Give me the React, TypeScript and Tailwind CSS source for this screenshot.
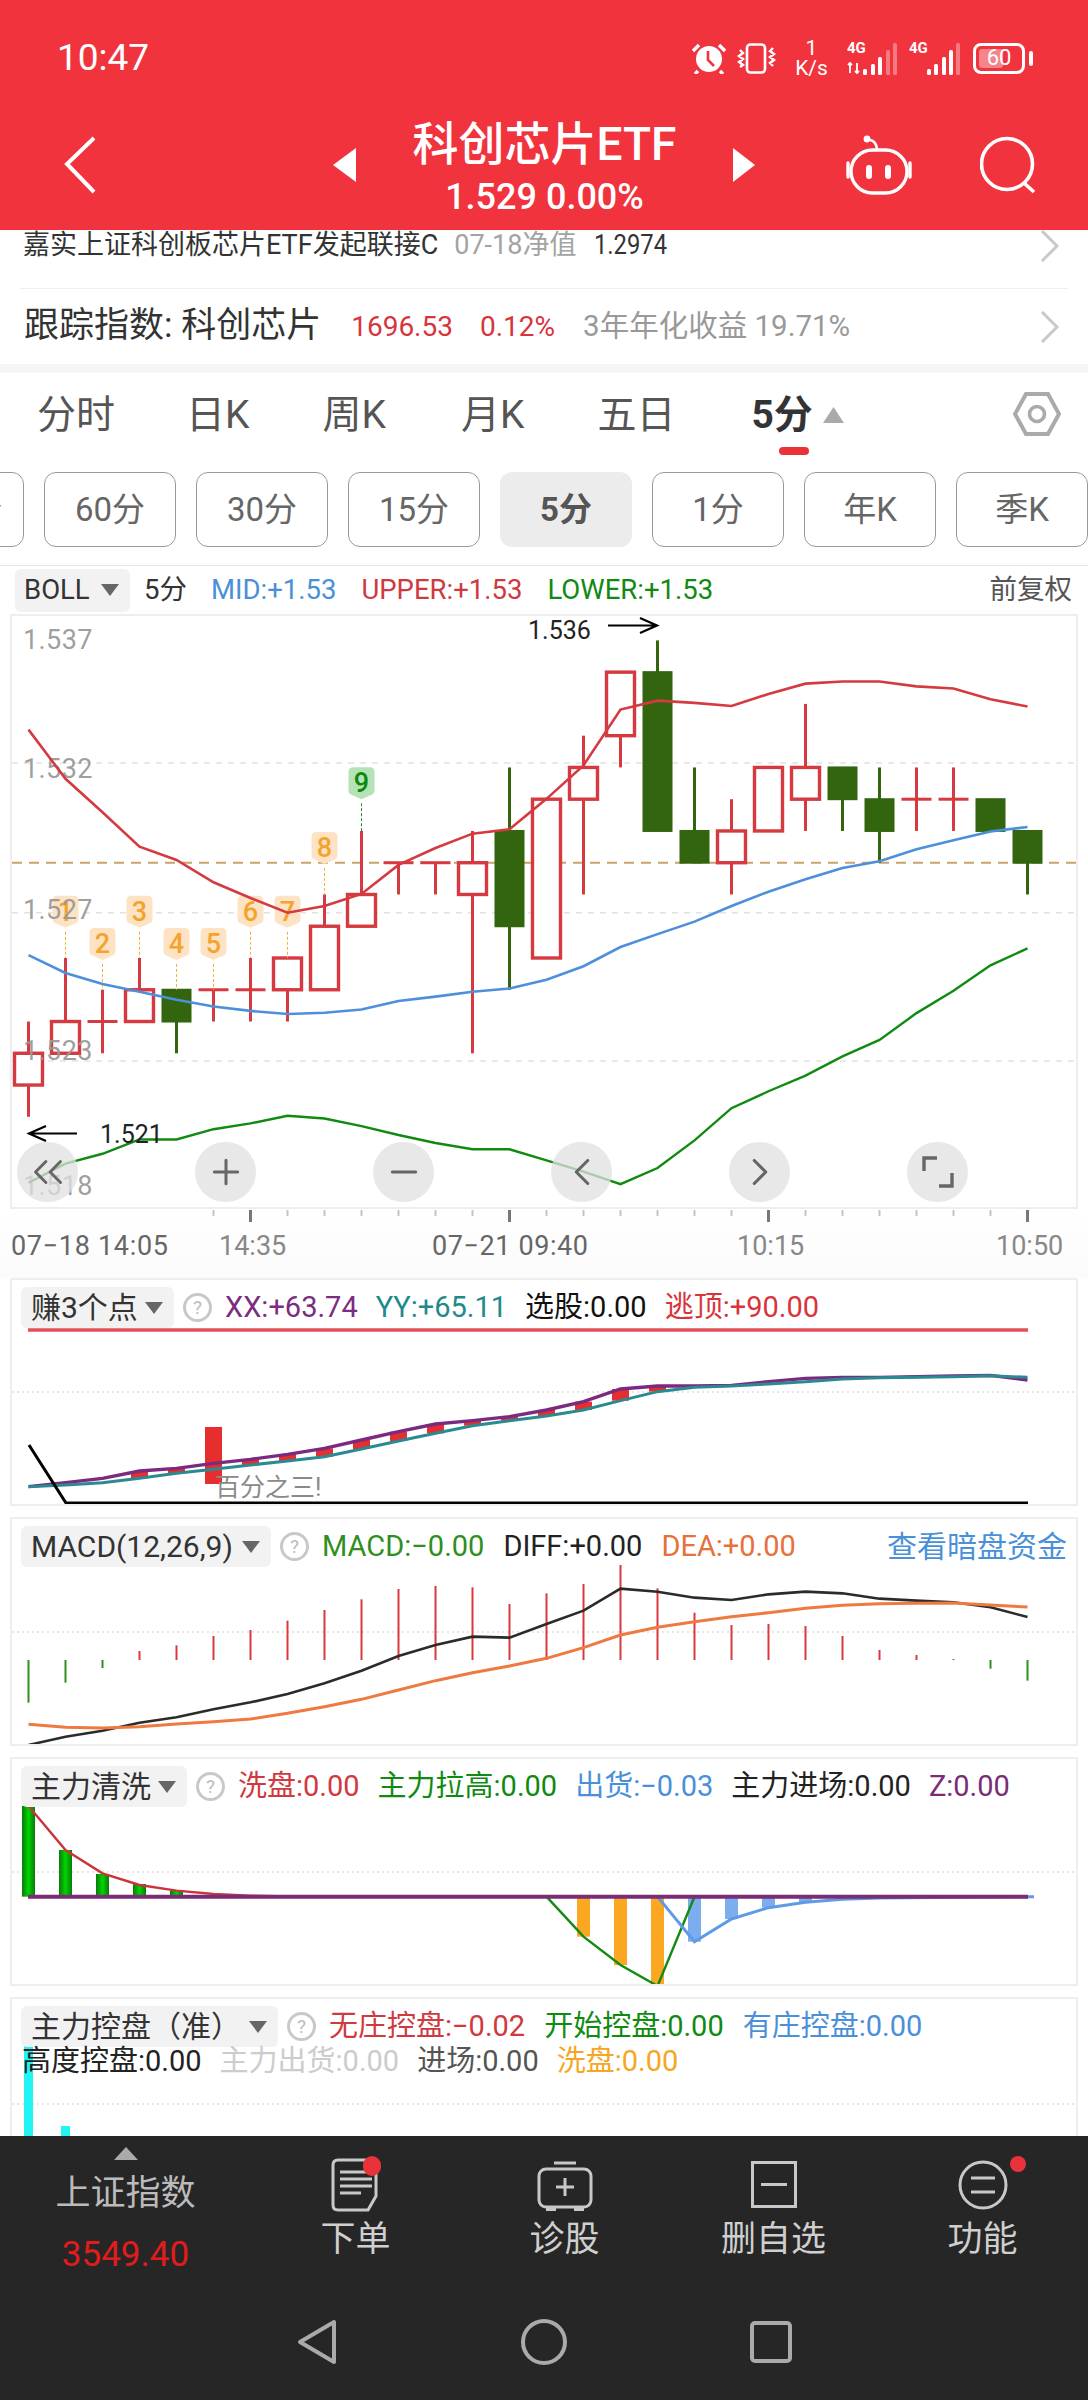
import React from "react";
import { ChevronLeft, ChevronRight, ChevronsLeft, Minus, Plus } from "lucide-react";

// chart x of candle i, same pitch in every panel
const cx = (i: number) => 28.5 + 37 * i;
// main chart: price unit (1.5xx) to page y
const py = (u: number) => 640.4 + (36 - u) * 31.76;
const mv = (v: number) => 560 + v / 2.24;
const z5 = (v: number) => 1260 + v / 3;
const z6 = (v: number) => 1740 + v / 3;

const line = (vals: number[], toY: (v: number) => number) =>
  vals.map((v, i) => `${cx(i)},${toY(v)}`).join(" ");

// [bodyLow, bodyHigh, wickLow, wickHigh, up]
const candles: [number, number, number, number, boolean][] = [
  [22, 23, 21, 24, true],
  [23, 24, 23, 26, true],
  [24, 24, 23, 25, true],
  [24, 25, 24, 26, true],
  [24, 25, 23, 25, false],
  [25, 25, 24, 25, true],
  [25, 25, 24, 26, true],
  [25, 26, 24, 26, true],
  [25, 27, 25, 28, true],
  [27, 28, 27, 30, true],
  [29, 29, 28, 29, true],
  [29, 29, 28, 29, true],
  [28, 29, 23, 30, true],
  [27, 30, 25, 32, false],
  [26, 31, 26, 31, true],
  [31, 32, 28, 33, true],
  [33, 35, 32, 35, true],
  [30, 35, 30, 36, false],
  [29, 30, 29, 32, false],
  [29, 30, 28, 31, true],
  [30, 32, 30, 32, true],
  [31, 32, 30, 34, true],
  [31, 32, 30, 32, false],
  [30, 31, 29, 32, false],
  [31, 31, 30, 32, true],
  [31, 31, 30, 32, true],
  [30, 31, 30, 31, false],
  [29, 30, 28, 30, false],
];

const upper = [380, 490, 565, 642, 672, 722, 757, 790, 775, 748, 683, 645, 613, 603, 535, 460, 335, 315, 320, 327, 300, 277, 272, 272, 283, 288, 312, 328];
const mid = [885, 925, 950, 967, 985, 1000, 1010, 1017, 1014, 1007, 988, 978, 967, 960, 940, 910, 867, 838, 810, 775, 743, 715, 690, 675, 648, 628, 608, 598];
const lower = [1395, 1352, 1330, 1298, 1298, 1275, 1262, 1245, 1251, 1268, 1288, 1306, 1320, 1320, 1345, 1370, 1398, 1362, 1300, 1228, 1190, 1155, 1112, 1075, 1015, 965, 908, 870];

const badges = [
  { i: 1, n: "1", v: 788 },
  { i: 2, n: "2", v: 860 },
  { i: 3, n: "3", v: 788 },
  { i: 4, n: "4", v: 860 },
  { i: 5, n: "5", v: 860 },
  { i: 6, n: "6", v: 788 },
  { i: 7, n: "7", v: 788 },
  { i: 8, n: "8", v: 645 },
  { i: 9, n: "9", v: 500 },
];

const xx = [680, 668, 655, 633, 625, 610, 598, 583, 565, 540, 515, 492, 482, 470, 450, 425, 387, 378, 378, 376, 365, 355, 352, 352, 350, 348, 346, 360];
const yy = [680, 675, 668, 655, 640, 628, 615, 603, 590, 567, 543, 520, 497, 482, 468, 450, 422, 395, 382, 378, 372, 365, 357, 353, 352, 350, 347, 352];

const macdBars = [1328, 1268, 1224, 1173, 1156, 1128, 1110, 1082, 1050, 1018, 987, 978, 982, 1032, 1000, 972, 915, 985, 1058, 1095, 1092, 1098, 1128, 1170, 1185, 1197, 1226, 1262];
const diff = [1455, 1430, 1412, 1388, 1372, 1348, 1327, 1302, 1270, 1232, 1188, 1155, 1130, 1133, 1092, 1052, 986, 995, 1013, 1020, 1003, 995, 1000, 1016, 1022, 1027, 1042, 1071];
const dea = [1393, 1402, 1404, 1400, 1392, 1385, 1377, 1360, 1340, 1318, 1290, 1262, 1238, 1218, 1195, 1163, 1125, 1102, 1085, 1070, 1058, 1045, 1036, 1031, 1030, 1029, 1035, 1041];

const washTops = [198, 330, 402, 432, 452];
const washLine = [198, 330, 400, 435, 452, 462, 467, 469, 470];

const tabs = [
  { label: "分时", cls: "ml-[37px]" },
  { label: "日K", cls: "ml-[71px]" },
  { label: "周K", cls: "ml-[73px]" },
  { label: "月K", cls: "ml-[75px]" },
  { label: "五日", cls: "ml-[73px]" },
];
const periods = ["120分", "60分", "30分", "15分", "5分", "1分", "年K", "季K"];

const Signal = ({ arrows }: { arrows?: boolean }) => (
  <svg width="52" height="36" viewBox="0 0 52 36" fill="#fff">
    <text x="0" y="13" fontSize="15" fontWeight="700" fill="#fff">
      4G
    </text>
    {arrows && (
      <path d="M3 23v10M1 25l2-2 2 2M10 23v10M8 31l2 2 2-2" stroke="#fff" strokeWidth="1.8" fill="none" />
    )}
    <rect x={arrows ? 16 : 18} y="29" width="4" height="6" rx="1.5" />
    <rect x={arrows ? 24 : 25} y="24" width="4" height="11" rx="1.5" />
    <rect x={arrows ? 31 : 33} y="17" width="4" height="18" rx="1.5" />
    <rect x={arrows ? 39 : 40} y="10" width="4" height="25" rx="1.5" fillOpacity={arrows ? 0.35 : 1} />
    <rect x={arrows ? 46 : 47} y="3" width="4" height="32" rx="1.5" fillOpacity="0.35" />
  </svg>
);

const StatusBar = () => (
  <div className="h-[100px] pt-[16px] flex items-center pr-[55px] text-white shrink-0">
    <span className="ml-[57px] text-[37px] leading-[44px]">10:47</span>
    <div className="ml-auto flex items-center">
      <svg width="34" height="31" viewBox="0 0 34 31">
        <circle cx="17" cy="16" r="13" fill="#fff" />
        <path d="M16 8v9l6 6" stroke="#f1333e" strokeWidth="2.6" fill="none" />
        <path d="M1 8l6-6M33 8l-6-6M6 28l-3 3M28 28l3 3" stroke="#fff" strokeWidth="3.4" />
      </svg>
      <svg className="ml-[11px]" width="39" height="31" viewBox="0 0 39 31" fill="none" stroke="#fff">
        <rect x="10" y="1.5" width="18" height="28" rx="3.5" strokeWidth="2.6" />
        <path d="M3 7l3 3-4 3 4 3-4 3 4 3-3 2M36 5l-3 3 4 3-4 3 4 3-4 3 3 3" strokeWidth="2.4" />
      </svg>
      <div className="ml-[19px] w-[33px] flex flex-col items-center text-[21px] leading-[20px]">
        <span>1</span>
        <span>K/s</span>
      </div>
      <div className="ml-[19px]">
        <Signal arrows />
      </div>
      <div className="ml-[10px]">
        <Signal />
      </div>
      <div className="ml-[12px] flex items-center">
        <div className="relative w-[52px] h-[31px] rounded-[8px] border-[3px] border-white overflow-hidden flex items-center justify-center text-[22px] leading-none">
          <div className="absolute left-[3px] top-[3px] bottom-[3px] w-[24px] rounded-[3px] bg-white/40" />
          <span className="relative">60</span>
        </div>
        <div className="ml-[4px] w-[4px] h-[15px] rounded-full bg-white" />
      </div>
    </div>
  </div>
);

const NavRow = () => (
  <div className="flex-1 flex items-center text-white">
    <svg className="ml-[64px]" width="32" height="58" viewBox="0 0 32 58" fill="none" stroke="#fff" strokeWidth="4">
      <path d="M30 2L3 28l27 28" />
    </svg>
    <svg className="ml-[237px]" width="23" height="34" viewBox="0 0 23 34" fill="#fff">
      <path d="M23 0v34L0 17z" />
    </svg>
    <div className="w-[377px] flex flex-col items-center">
      <span className="text-[46px] leading-[60px] font-medium">科创芯片ETF</span>
      <span className="mt-[3px] text-[36px] leading-[40px] font-medium">1.529 0.00%</span>
    </div>
    <svg width="22" height="34" viewBox="0 0 22 34" fill="#fff">
      <path d="M0 0v34l22-17z" />
    </svg>
    <svg className="ml-[91px]" width="66" height="60" viewBox="0 0 66 60" fill="none" stroke="#fff" strokeWidth="3.4">
      <rect x="5" y="15" width="56" height="43" rx="21.5" />
      <path d="M2 28v14M64 28v14" strokeLinecap="round" />
      <path d="M24 5q6 1 7 9" strokeWidth="2.6" />
      <circle cx="21" cy="4" r="3.4" fill="#fff" stroke="none" />
      <rect x="20" y="30" width="6" height="14" rx="3" fill="#fff" stroke="none" />
      <rect x="39" y="30" width="6" height="14" rx="3" fill="#fff" stroke="none" />
    </svg>
    <svg className="ml-[68px]" width="56" height="58" viewBox="0 0 56 58" fill="none" stroke="#fff" strokeWidth="3.6">
      <circle cx="27" cy="28" r="25.5" />
      <path d="M44 47l10 9" />
    </svg>
  </div>
);

const RowChevron = () => (
  <svg width="20" height="32" viewBox="0 0 20 32" fill="none" stroke="#c9c9c9" strokeWidth="3">
    <path d="M2 1l15 15L2 31" />
  </svg>
);

const TabBar = () => (
  <div className="h-[99px] pt-[18px] flex items-start text-[39px] leading-[48px] text-[#555]">
    {tabs.map((t) => (
      <span key={t.label} className={t.cls}>
        {t.label}
      </span>
    ))}
    <span className="relative ml-[76px] font-bold text-[#333]">
      5分
      <span className="absolute left-[28px] top-[56px] w-[30px] h-[8px] rounded-full bg-[#e8333a]" />
    </span>
    <svg className="ml-[10px] mt-[16px]" width="21" height="16" viewBox="0 0 21 16" fill="#aaa">
      <path d="M10.5 0L21 16H0z" />
    </svg>
    <svg className="ml-auto mr-[27px]" width="48" height="46" viewBox="0 0 48 46" fill="none" stroke="#aaa" strokeWidth="4">
      <path d="M13 3h22l11 20-11 20H13L2 23z" />
      <circle cx="24" cy="23" r="7.5" strokeWidth="3.6" />
    </svg>
  </div>
);

const PeriodPills = () => (
  <div className="h-[94px] border-b border-[#e5e5e5] overflow-hidden">
    <div className="flex gap-[20px] -ml-[108px] w-[1300px]">
      {periods.map((p) => (
        <div
          key={p}
          className={
            p === "5分"
              ? "w-[132px] h-[75px] shrink-0 rounded-[12px] bg-[#ececec] flex items-center justify-center text-[33px] font-bold text-[#555]"
              : "w-[132px] h-[75px] shrink-0 rounded-[12px] border border-[#999] flex items-center justify-center text-[33px] text-[#666]"
          }
        >
          {p}
        </div>
      ))}
    </div>
  </div>
);

const Caret = () => (
  <svg className="ml-auto mr-[11px] shrink-0" width="18" height="12" viewBox="0 0 18 12" fill="#666">
    <path d="M0 0h18L9 12z" />
  </svg>
);

const HelpDot = () => (
  <span className="w-[29px] h-[29px] ml-[9px] mr-[13px] shrink-0 rounded-full border-[3px] border-[#c8c8c8] flex items-center justify-center text-[19px] leading-none text-[#bbb]">
    ?
  </span>
);

type Item = { text: string; color: string };

const Legend = ({
  name,
  widthCls,
  gapCls,
  items,
  extra,
}: {
  name: string;
  widthCls: string;
  gapCls: string;
  items: Item[];
  extra?: React.ReactNode;
}) => (
  <div className="absolute left-[9px] right-0 top-[7px] h-[41px] flex items-center text-[29px] whitespace-nowrap">
    <div className={`${widthCls} h-[41px] shrink-0 pl-[10px] rounded-[6px] bg-[#f2f2f2] flex items-center text-[30px] text-[#333]`}>
      {name}
      <Caret />
    </div>
    <HelpDot />
    <div className={`flex ${gapCls}`}>
      {items.map((it) => (
        <span key={it.text} className={it.color}>
          {it.text}
        </span>
      ))}
    </div>
    {extra}
  </div>
);

const MainChart = () => (
  <svg className="block" width="1064" height="591" viewBox="12 616 1064 591" fontSize="27">
    {[763, 912.7, 1061].map((y) => (
      <line key={y} x1="12" x2="1076" y1={y} y2={y} stroke="#e2e2e2" strokeWidth="1.5" strokeDasharray="6 6" />
    ))}
    <line x1="12" x2="1076" y1={py(29)} y2={py(29)} stroke="#c9a26c" strokeWidth="2" strokeDasharray="10 7" />
    {candles.map(([lo, hi, wl, wh, up], i) => {
      const color = up ? "#d43a40" : "#33650f";
      return (
        <g key={i}>
          <line x1={cx(i)} x2={cx(i)} y1={py(wh)} y2={py(wl)} stroke={color} strokeWidth="3" />
          {lo === hi ? (
            <line x1={cx(i) - 15} x2={cx(i) + 15} y1={py(hi)} y2={py(hi)} stroke={color} strokeWidth="3" />
          ) : (
            <rect
              x={cx(i) - 14}
              y={py(hi)}
              width="28"
              height={py(lo) - py(hi)}
              fill={up ? "#fff" : color}
              stroke={color}
              strokeWidth={up ? 3.4 : 2}
            />
          )}
        </g>
      );
    })}
    {badges.map((b) => {
      const green = b.n === "9";
      const y = mv(b.v);
      const x = cx(b.i);
      return (
        <g key={b.n}>
          <line
            x1={x}
            x2={x}
            y1={y + 20}
            y2={py(candles[b.i][3])}
            stroke={green ? "#1c8c1c" : "#f0b040"}
            strokeWidth="1"
            strokeDasharray="3 2"
          />
          <path
            d={`M${x - 8} ${y - 16}h16q5 0 5 5v18q0 4-4 5l-9 4-9-4q-4-1-4-5v-18q0-5 5-5z`}
            fill={green ? "#b5e2b7" : "#fde3c3"}
          />
          <text x={x} y={y + 9} textAnchor="middle" fontWeight="500" fill={green ? "#0b8a0b" : "#f4a32c"}>
            {b.n}
          </text>
        </g>
      );
    })}
    {[
      ["1.537", 639],
      ["1.532", 768],
      ["1.527", 909.5],
      ["1.523", 1050],
      ["1.518", 1185],
    ].map(([t, y]) => (
      <text key={t} x="23" y={Number(y) + 9.5} fill="#999" fillOpacity="0.95" letterSpacing="0.4">
        {t}
      </text>
    ))}
    <polyline points={line(upper, mv)} fill="none" stroke="#d43a40" strokeWidth="2.6" />
    <polyline points={line(mid, mv)} fill="none" stroke="#4e8fdb" strokeWidth="2.6" />
    <polyline points={line(lower, mv)} fill="none" stroke="#118a11" strokeWidth="2.4" />
    <text x="528" y="639" fill="#222" fontSize="25">
      1.536
    </text>
    <path d="M608 625.5h49M640 618l17 7.500-17 7.500" fill="none" stroke="#000" strokeWidth="2.2" />
    <text x="100" y="1143" fill="#222" fontSize="25">
      1.521
    </text>
    <path d="M77 1133.500H29M46 1126l-17 7.500 17 7.500" fill="none" stroke="#000" strokeWidth="2.2" />
  </svg>
);

const ChartButtons = () => (
  <div className="absolute left-[5px] top-[526px] flex gap-[117px]">
    {[
      <ChevronsLeft key="a" size={50} strokeWidth={1.4} />,
      <Plus key="b" size={40} strokeWidth={1.8} />,
      <Minus key="c" size={40} strokeWidth={1.8} />,
      <ChevronLeft key="d" size={46} strokeWidth={1.6} />,
      <ChevronRight key="e" size={46} strokeWidth={1.6} />,
      <svg key="f" width="34" height="34" viewBox="0 0 34 34" fill="none" stroke="currentColor" strokeWidth="3.4">
        <path d="M3 16V3h13M31 18v13H18" />
      </svg>,
    ].map((icon, i) => (
      <div key={i} className="w-[61px] h-[60px] rounded-full bg-[#e0e0e0]/75 flex items-center justify-center text-[#666]">
        {icon}
      </div>
    ))}
  </div>
);

const TimeAxis = () => (
  <svg className="block" width="1088" height="61" viewBox="0 1209 1088 61" fontSize="27" fill="#888">
    {candles.map((_, i) => {
      if (i < 5) return null;
      const major = i === 6 || i === 13 || i === 20 || i === 27;
      return (
        <line
          key={i}
          x1={cx(i)}
          x2={cx(i)}
          y1="1210"
          y2={major ? 1222 : 1216}
          stroke={major ? "#777" : "#c4c4c4"}
          strokeWidth={major ? 3 : 2}
        />
      );
    })}
    <text x="11" y="1255" fill="#666" textLength="157">
      07−18 14:05
    </text>
    <text x="219" y="1255">
      14:35
    </text>
    <text x="432" y="1255" fill="#666" textLength="156">
      07−21 09:40
    </text>
    <text x="737" y="1255">
      10:15
    </text>
    <text x="996" y="1255">
      10:50
    </text>
  </svg>
);

const DottedGrid = ({ y }: { y: number }) => (
  <line x1="12" x2="1076" y1={y} y2={y} stroke="#dedede" strokeWidth="1.5" strokeDasharray="2 3" />
);

const Zhuan3Chart = () => (
  <svg className="block" width="1064" height="224" viewBox="12 1280 1064 224">
    <DottedGrid y={1392} />
    <line x1="28" x2="1028" y1="1330" y2="1330" stroke="#e25059" strokeWidth="3.4" />
    {xx.map((v, i) =>
      i >= 3 && i <= 17 && i !== 5 ? (
        <rect key={i} x={cx(i) - 8.500} y={z5(v)} width="17" height={(yy[i] - v) / 3} fill="#e62e2e" />
      ) : null,
    )}
    <rect x="205" y="1427" width="17" height="57" fill="#e62e2e" />
    <polyline points={line(xx, z5)} fill="none" stroke="#7b2a7f" strokeWidth="3.4" />
    <polyline points={line(yy, z5)} fill="none" stroke="#2a8a92" strokeWidth="3" />
    <polyline points={`29,1445 66,1503 1028,1503`} fill="none" stroke="#000" strokeWidth="3" />
    <text x="215" y="1496" fontSize="25" fill="#8a8a8a">
      百分之三!
    </text>
  </svg>
);

const MacdChart = () => (
  <svg className="block" width="1064" height="225" viewBox="12 1519 1064 225">
    <DottedGrid y={1632} />
    {macdBars.map((v, i) => (
      <line
        key={i}
        x1={cx(i)}
        x2={cx(i)}
        y1={z5(1200)}
        y2={z5(v)}
        stroke={v > 1200 ? "#2f8f1f" : "#d9383e"}
        strokeWidth="2"
      />
    ))}
    <polyline points={line(diff, z5)} fill="none" stroke="#2b2b2b" strokeWidth="2.6" />
    <polyline points={line(dea, z5)} fill="none" stroke="#ee7a42" strokeWidth="3" />
  </svg>
);

const WashChart = () => (
  <svg className="block" width="1064" height="225" viewBox="12 1759 1064 225">
    <defs>
      <linearGradient id="washBar" x1="0" x2="1" y1="0" y2="0">
        <stop offset="0" stopColor="#0a7a0a" />
        <stop offset="0.5" stopColor="#00d400" />
        <stop offset="1" stopColor="#0a7a0a" />
      </linearGradient>
    </defs>
    <DottedGrid y={1872} />
    {washTops.map((v, i) => (
      <rect key={i} x={cx(i) - 6.500} y={z6(v)} width="13" height={z6(470) - z6(v)} fill="url(#washBar)" />
    ))}
    {[
      [15, 590],
      [16, 675],
      [17, 738],
    ].map(([i, v]) => (
      <rect key={i} x={cx(i) - 6.500} y={z6(470)} width="13" height={z6(v) - z6(470)} fill="#fba722" />
    ))}
    {[
      [18, 605],
      [19, 537],
      [20, 503],
      [21, 487],
      [22, 480],
    ].map(([i, v]) => (
      <rect key={i} x={cx(i) - 6.500} y={z6(470)} width="13" height={z6(v) - z6(470)} fill="#7cadee" />
    ))}
    <polyline
      points={`${cx(14)},${z6(470)} ${cx(15)},${z6(590)} ${cx(16)},${z6(675)} ${cx(17)},${z6(738)} ${cx(18)},${z6(470)}`}
      fill="none"
      stroke="#138a13"
      strokeWidth="2.4"
    />
    <polyline
      points={`${cx(17)},${z6(470)} ${cx(18)},${z6(605)} ${cx(19)},${z6(537)} ${cx(20)},${z6(503)} ${cx(21)},${z6(487)} ${cx(22)},${z6(478)} ${cx(23)},${z6(474)} 1034,${z6(470)}`}
      fill="none"
      stroke="#5e9be6"
      strokeWidth="3"
    />
    <polyline points={line(washLine, z6)} fill="none" stroke="#c9353b" strokeWidth="2.4" />
    <line x1="28" x2="1028" y1={z6(470)} y2={z6(470)} stroke="#7a2c74" strokeWidth="4" />
  </svg>
);

const ControlChart = () => (
  <svg className="block" width="1064" height="137" viewBox="12 1999 1064 137">
    <DottedGrid y={2104} />
    <rect x="24" y="2045" width="9" height="91" fill="#22f4f4" />
    <rect x="61" y="2126" width="9" height="10" fill="#22f4f4" />
  </svg>
);

const BottomBar = () => (
  <div className="h-[264px] shrink-0 bg-[#262626] text-[#cfcfcf]">
    <div className="h-[183px] flex">
      <div className="w-[251px] pt-[11px] flex flex-col items-center">
        <svg width="24" height="13" viewBox="0 0 24 13" fill="#aaa">
          <path d="M12 0l12 13H0z" />
        </svg>
        <span className="mt-[14px] text-[35px] leading-[40px] text-[#bbb]">上证指数</span>
        <span className="mt-[21px] text-[35px] leading-[40px] text-[#e01c1c]">3549.40</span>
      </div>
      <div className="w-[209px] pt-[20px] flex flex-col items-center">
        <div className="relative h-[57px]">
          <svg className="mt-[2px]" width="50" height="54" viewBox="0 0 50 54" fill="none" stroke="#c8c8c8" strokeWidth="3">
            <path d="M7 2h32q6 0 6 6v30l-8 14H7q-5 0-5-5V7q0-5 5-5z" />
            <path d="M9 14h28M9 21h32M9 28h32M9 35h21" />
          </svg>
          <span className="absolute left-[32px] top-0 w-[18px] h-[20px] rounded-full bg-[#e8333a]" />
        </div>
        <span className="mt-[7px] text-[35px] leading-[40px]">下单</span>
      </div>
      <div className="w-[209px] pt-[20px] flex flex-col items-center">
        <div className="h-[57px]">
          <svg className="mt-[5px]" width="56" height="50" viewBox="0 0 56 50" fill="none" stroke="#c8c8c8" strokeWidth="3">
            <path d="M17 2h22" />
            <rect x="2" y="8" width="52" height="38" rx="7" />
            <path d="M9 48h10M37 48h10" strokeWidth="4" />
            <path d="M28 17v18M19 26h18" />
          </svg>
        </div>
        <span className="mt-[7px] text-[35px] leading-[40px]">诊股</span>
      </div>
      <div className="w-[209px] pt-[20px] flex flex-col items-center">
        <div className="h-[57px]">
          <svg className="mt-[5px]" width="46" height="47" viewBox="0 0 46 47" fill="none" stroke="#c8c8c8" strokeWidth="3">
            <rect x="1.500" y="1.500" width="43" height="44" />
            <path d="M10 23.500h26" />
          </svg>
        </div>
        <span className="mt-[7px] text-[35px] leading-[40px]">删自选</span>
      </div>
      <div className="w-[209px] pt-[20px] flex flex-col items-center">
        <div className="relative h-[57px]">
          <svg className="mt-[4px]" width="50" height="50" viewBox="0 0 50 50" fill="none" stroke="#c8c8c8" strokeWidth="3">
            <circle cx="25" cy="25" r="23" />
            <path d="M13 18h24M13 32h24" />
          </svg>
          <span className="absolute left-[52px] top-0 w-[16px] h-[16px] rounded-full bg-[#e8333a]" />
        </div>
        <span className="mt-[7px] text-[35px] leading-[40px]">功能</span>
      </div>
    </div>
    <div className="flex items-center pl-[297px]">
      <svg width="40" height="46" viewBox="0 0 40 46" fill="none" stroke="#aaa" strokeWidth="4" strokeLinejoin="round">
        <path d="M37 3v40L3 23z" />
      </svg>
      <svg className="ml-[184px]" width="46" height="46" viewBox="0 0 46 46" fill="none" stroke="#aaa" strokeWidth="4">
        <circle cx="23" cy="23" r="21" />
      </svg>
      <svg className="ml-[183px]" width="42" height="42" viewBox="0 0 42 42" fill="none" stroke="#aaa" strokeWidth="4">
        <rect x="2" y="2" width="38" height="38" rx="3" />
      </svg>
    </div>
  </div>
);

export default function App() {
  return (
    <div className="w-[1088px] h-[2400px] bg-white flex flex-col overflow-hidden font-['Roboto','Noto_Sans_CJK_SC',sans-serif]">
      <header className="h-[230px] shrink-0 bg-[#f1333e] flex flex-col">
        <StatusBar />
        <NavRow />
      </header>

      <main className="flex-1 min-h-0 overflow-hidden">
        <div className="mx-[20px] h-[59px] border-b border-[#eee] flex items-start pl-[3px] pr-[8px] text-[27px] leading-[30px] whitespace-nowrap">
          <span className="text-[#333]">嘉实上证科创板芯片ETF发起联接C</span>
          <span className="ml-[16px] text-[#a3a3a3]">07-18净值</span>
          <span className="ml-[18px] w-[73px] inline-block origin-left scale-x-[0.88] text-[#333]">1.2974</span>
          <span className="ml-auto">
            <RowChevron />
          </span>
        </div>
        <div className="mx-[20px] h-[75px] flex items-center pl-[4px] pr-[8px] whitespace-nowrap text-[28px]">
          <span className="text-[35px] text-[#333]">跟踪指数: 科创芯片</span>
          <span className="ml-[30px] text-[#d8343c]">1696.53</span>
          <span className="ml-[27px] text-[#d8343c]">0.12%</span>
          <span className="ml-[28px] text-[29.5px] text-[#999]">3年年化收益 19.71%</span>
          <span className="ml-auto">
            <RowChevron />
          </span>
        </div>
        <div className="h-[9px] bg-[#f5f5f5]" />

        <TabBar />
        <PeriodPills />

        <div className="h-[48px] flex items-center text-[27.5px] whitespace-nowrap">
          <div className="ml-[15px] w-[115px] h-[43px] pl-[9px] rounded-[6px] bg-[#f2f2f2] flex items-center text-[#333]">
            BOLL
            <Caret />
          </div>
          <span className="ml-[14px] text-[#333]">5分</span>
          <span className="ml-[24px] text-[#4a90d9]">MID:+1.53</span>
          <span className="ml-[25px] text-[#d0393e]">UPPER:+1.53</span>
          <span className="ml-[25px] text-[#118a11]">LOWER:+1.53</span>
          <span className="ml-auto mr-[16px] text-[#555]">前复权</span>
        </div>

        <div className="relative ml-[10px] w-[1068px] h-[595px] border-2 border-[#eee]">
          <MainChart />
          <ChartButtons />
        </div>
        <div className="h-[69px] bg-gradient-to-b from-white to-[#fbfbfb]">
          <TimeAxis />
        </div>

        <div className="relative ml-[10px] w-[1068px] h-[228px] border-2 border-[#eee]">
          <Zhuan3Chart />
          <Legend
            name="赚3个点"
            widthCls="w-[153px]"
            gapCls="gap-[18px]"
            items={[
              { text: "XX:+63.74", color: "text-[#7b2d7f]" },
              { text: "YY:+65.11", color: "text-[#1f8a8a]" },
              { text: "选股:0.00", color: "text-[#111]" },
              { text: "逃顶:+90.00", color: "text-[#d8343c]" },
            ]}
          />
        </div>

        <div className="relative mt-[11px] ml-[10px] w-[1068px] h-[229px] border-2 border-[#eee]">
          <MacdChart />
          <Legend
            name="MACD(12,26,9)"
            widthCls="w-[250px]"
            gapCls="gap-[19px]"
            items={[
              { text: "MACD:−0.00", color: "text-[#2f8f1f]" },
              { text: "DIFF:+0.00", color: "text-[#222]" },
              { text: "DEA:+0.00", color: "text-[#e8703a]" },
            ]}
            extra={<span className="ml-auto mr-[9px] text-[30px] text-[#4a90d9]">查看暗盘资金</span>}
          />
        </div>

        <div className="relative mt-[11px] ml-[10px] w-[1068px] h-[229px] border-2 border-[#eee]">
          <WashChart />
          <Legend
            name="主力清洗"
            widthCls="w-[166px]"
            gapCls="gap-[18px]"
            items={[
              { text: "洗盘:0.00", color: "text-[#d0393e]" },
              { text: "主力拉高:0.00", color: "text-[#118a11]" },
              { text: "出货:−0.03", color: "text-[#4a90d9]" },
              { text: "主力进场:0.00", color: "text-[#222]" },
              { text: "Z:0.00", color: "text-[#7a2c74]" },
            ]}
          />
        </div>

        <div className="relative mt-[11px] ml-[10px] w-[1068px] border-2 border-[#eee]">
          <ControlChart />
          <Legend
            name="主力控盘（准）"
            widthCls="w-[257px]"
            gapCls="gap-[19px]"
            items={[
              { text: "无庄控盘:−0.02", color: "text-[#d0393e]" },
              { text: "开始控盘:0.00", color: "text-[#118a11]" },
              { text: "有庄控盘:0.00", color: "text-[#4a90d9]" },
            ]}
          />
          <div className="absolute left-[10px] top-[42px] flex gap-[18px] text-[29px] leading-[40px] whitespace-nowrap">
            <span className="text-[#222]">高度控盘:0.00</span>
            <span className="text-[#ccc]">主力出货:0.00</span>
            <span className="text-[#555]">进场:0.00</span>
            <span className="text-[#f5a623]">洗盘:0.00</span>
          </div>
        </div>
      </main>

      <BottomBar />
    </div>
  );
}
